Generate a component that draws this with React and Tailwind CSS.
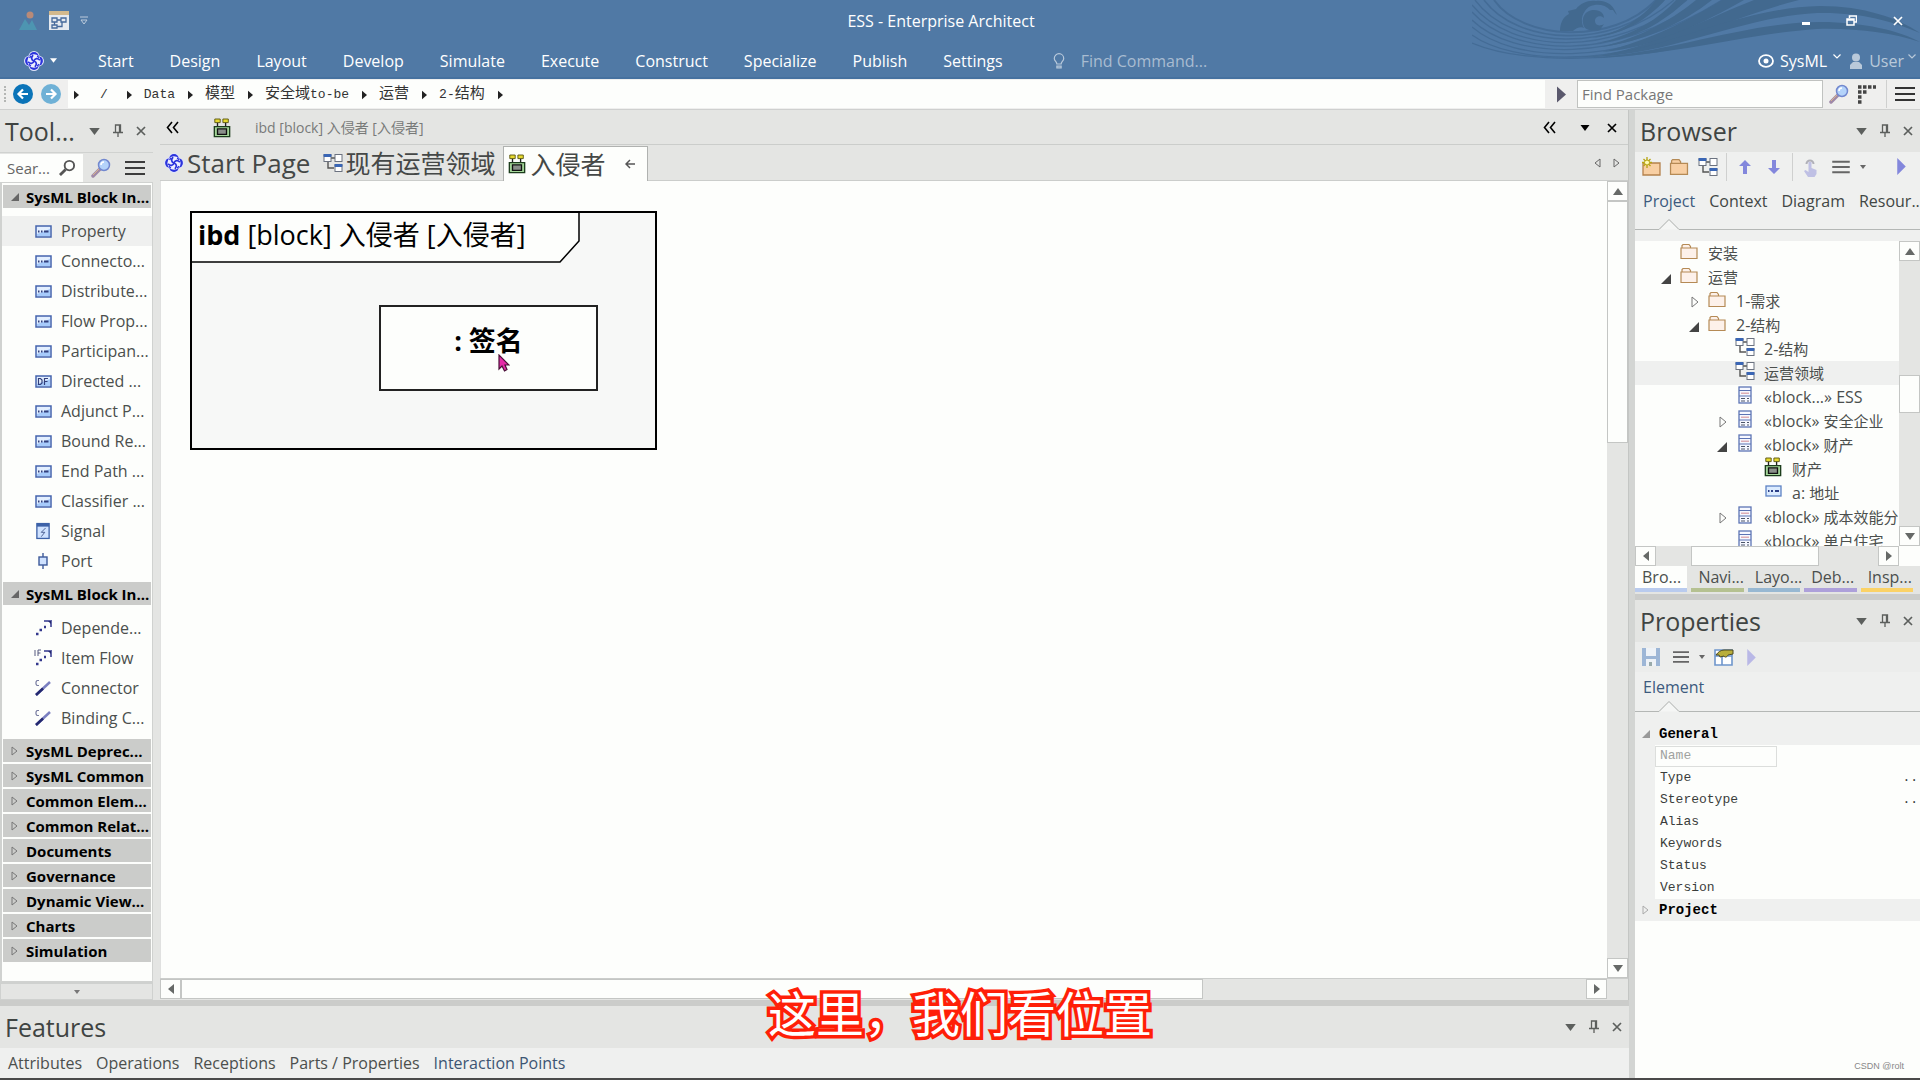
import React, { useState } from 'react'

const menus = ['Start', 'Design', 'Layout', 'Develop', 'Simulate', 'Execute', 'Construct', 'Specialize', 'Publish', 'Settings']

const crumbs = ['/', 'Data', '模型', '安全域to-be', '运营', '2-结构']

const toolItems = [
    { label: 'Property', icon: 'prop' },
    { label: 'Connecto...', icon: 'prop' },
    { label: 'Distribute...', icon: 'prop' },
    { label: 'Flow Prop...', icon: 'prop' },
    { label: 'Participan...', icon: 'prop' },
    { label: 'Directed ...', icon: 'df' },
    { label: 'Adjunct P...', icon: 'prop' },
    { label: 'Bound Re...', icon: 'prop' },
    { label: 'End Path ...', icon: 'prop' },
    { label: 'Classifier ...', icon: 'prop' },
    { label: 'Signal', icon: 'signal' },
    { label: 'Port', icon: 'port' },
]

const relationItems = [
    { label: 'Depende...', icon: 'dep' },
    { label: 'Item Flow', icon: 'flow' },
    { label: 'Connector', icon: 'conn' },
    { label: 'Binding C...', icon: 'conn' },
]

const closedGroups = ['SysML Deprec...', 'SysML Common', 'Common Elem...', 'Common Relat...', 'Documents', 'Governance', 'Dynamic View...', 'Charts', 'Simulation']

const treeRows = [
    { indent: 'pl-[22px]', icon: 'folder', text: '安装' },
    { indent: 'pl-[22px]', state: 'open', icon: 'folder', text: '运营' },
    { indent: 'pl-[50px]', state: 'closed', icon: 'folder', text: '1-需求' },
    { indent: 'pl-[50px]', state: 'open', icon: 'folder', text: '2-结构' },
    { indent: 'pl-[78px]', icon: 'diagram', text: '2-结构' },
    { indent: 'pl-[78px]', icon: 'diagram', text: '运营领域', selected: true },
    { indent: 'pl-[78px]', icon: 'block', text: '«block...» ESS' },
    { indent: 'pl-[78px]', state: 'closed', icon: 'block', text: '«block» 安全企业' },
    { indent: 'pl-[78px]', state: 'open', icon: 'block', text: '«block» 财产' },
    { indent: 'pl-[106px]', icon: 'ibd', text: '财产' },
    { indent: 'pl-[106px]', icon: 'part', text: 'a: 地址' },
    { indent: 'pl-[78px]', state: 'closed', icon: 'block', text: '«block» 成本效能分' },
    { indent: 'pl-[78px]', icon: 'block', text: '«block» 单户住宅' },
]

const dockTabs = [
    { label: 'Bro...', line: 'border-[#b9cbee]', active: true },
    { label: 'Navi...', line: 'border-[#b5c191]' },
    { label: 'Layo...', line: 'border-[#98b8d2]' },
    { label: 'Deb...', line: 'border-[#ada0da]' },
    { label: 'Insp...', line: 'border-[#fbd266]' },
]

const props = ['Type', 'Stereotype', 'Alias', 'Keywords', 'Status', 'Version']

// Chinese runs are set at 15px next to the larger or smaller latin text
function Mixed({ text }) {
    return text.split(/([\u4e00-\u9fff]+)/).map((part, i) => (
        i % 2 ? <span key={i} className="text-[15px]">{part}</span> : part
    ))
}

function Logo({ className }) {
    return (
        <svg viewBox="0 0 22 22" className={className}>
            <g fill="#dfe3fb">
                <circle cx="11" cy="6" r="6" />
                <circle cx="16" cy="11" r="6" />
                <circle cx="11" cy="16" r="6" />
                <circle cx="6" cy="11" r="6" />
            </g>
            <g fill="#2b33dc">
                <circle cx="11" cy="6.500" r="5.300" />
                <circle cx="15.500" cy="11" r="5.300" />
                <circle cx="11" cy="15.500" r="5.300" />
                <circle cx="6.500" cy="11" r="5.300" />
            </g>
            <circle cx="11" cy="11" r="7.300" fill="#eef0ff" />
            <g fill="none" stroke="#2b33dc" strokeWidth="1.900">
                <path d="M11 11C8 10 7.500 7 10 4.500M11 11C12 8 15 7.500 17.500 10M11 11C14 12 14.500 15 12 17.500M11 11C10 14 7 14.500 4.500 12" />
            </g>
            <path d="M6 7.500l2-2M14.500 5.500l2 2M16.500 14.500l-2 2M7.500 16.500l-2-2" stroke="#2b33dc" strokeWidth="1.500" />
        </svg>
    )
}

function Down({ className }) {
    return <svg viewBox="0 0 12 8" className={className}><path d="M0 0h12L6 8z" fill="currentColor" /></svg>
}

function Pin() {
    return (
        <svg viewBox="0 0 10 14" className="w-[10px] h-[14px]">
            <path d="M2.500 8V1h5v7M6.500 1v7M0 8.500h10M5 9v4" fill="none" stroke="currentColor" strokeWidth="1.300" />
        </svg>
    )
}

function Cross({ className }) {
    return (
        <svg viewBox="0 0 10 10" className={className}>
            <path d="M1 1l8 8M9 1l-8 8" fill="none" stroke="currentColor" strokeWidth="1.700" />
        </svg>
    )
}

function Burger({ className }) {
    return (
        <svg viewBox="0 0 20 16" className={className}>
            <path d="M0 2h20M0 8h20M0 14h20" stroke="currentColor" strokeWidth="2.200" />
        </svg>
    )
}

function Glass({ className }) {
    return (
        <svg viewBox="0 0 20 20" className={className}>
            <path d="M2 18l7-7" stroke="#a08aa8" strokeWidth="3.500" strokeLinecap="round" />
            <path d="M2 17l6-6" stroke="#d9b48d" strokeWidth="1" />
            <circle cx="13" cy="7" r="5.500" fill="#b4d3fa" stroke="#7288cf" strokeWidth="1.500" />
            <path d="M10 7a3 3 0 0 1 3-3" stroke="#fff" strokeWidth="1.500" fill="none" />
        </svg>
    )
}

function DiagramIcon({ className }) {
    return (
        <svg viewBox="0 0 20 20" className={className}>
            <path d="M8 5h4M5 8v7h6" fill="none" stroke="#555" strokeWidth="1.400" />
            <g fill="#fff" stroke="#6b7280">
                <rect x="1" y="1.500" width="7" height="7" />
                <rect x="12" y="1.500" width="7" height="7" />
                <rect x="12" y="11.500" width="7" height="7" />
            </g>
            <path d="M1 1.500h7v2H1zM12 11.500h7v2h-7z" fill="#3a66b5" stroke="#3a66b5" />
        </svg>
    )
}

function IbdIcon({ className }) {
    return (
        <svg viewBox="0 0 20 22" className={className}>
            <path d="M5 5v8M14 5v5" stroke="#222" strokeWidth="1.500" />
            <path d="M2 1h6v4H2zM11 1h6v4h-6z" fill="#e6d92e" stroke="#57530f" />
            <path d="M1.500 9.500h17v11h-17z" fill="#a6d89b" stroke="#1c3d1c" strokeWidth="1.500" />
            <path d="M5 12h10v6H5z" fill="#8a8f8a" stroke="#111" strokeWidth="1.500" />
        </svg>
    )
}

function FolderIcon({ className, fill }) {
    return (
        <svg viewBox="0 0 18 17" className={className}>
            <path d="M2 5V2.500L3 1.500h6l1.500 2V5M1 5h16v10.500H1z" fill={fill} stroke="#b58a55" strokeWidth="1.200" />
        </svg>
    )
}

function TreeIcon({ name }) {
    if (name === 'folder') return <FolderIcon className="w-[18px] h-[17px]" fill="#fdf1ea" />
    if (name === 'diagram') return <DiagramIcon className="w-5 h-5" />
    if (name === 'ibd') return <IbdIcon className="w-[18px] h-5" />
    if (name === 'part') {
        return (
            <svg viewBox="0 0 17 12" className="w-[17px] h-3">
                <rect x="1" y="1" width="15" height="10" fill="#dcecff" stroke="#5d82c4" strokeWidth="1.300" />
                <path d="M3 6h1.500M6 6h2M10 6h4" stroke="#2c3f86" strokeWidth="1.800" />
            </svg>
        )
    }
    return (
        <svg viewBox="0 0 14 18" className="w-[14px] h-[18px]">
            <rect x="1" y="1" width="12" height="16" fill="#f6f8ff" stroke="#5d74b4" strokeWidth="1.300" />
            <path d="M1 4.500h12M1 10h12" stroke="#5d74b4" strokeWidth="1.200" />
            <path d="M3 7.200h8" stroke="#d79aa2" strokeWidth="1.200" />
            <path d="M3 12.500h4M9 12.500h2M3 15h4M9 15h2" stroke="#4b5568" />
        </svg>
    )
}

function ToolIcon({ name }) {
    if (name === 'signal') {
        return (
            <svg viewBox="0 0 16 19" className="w-[14px] h-[18px]">
                <rect x="1" y="1" width="14" height="17" fill="#cfe2ff" stroke="#3d62a8" strokeWidth="1.500" />
                <path d="M1 3h14" stroke="#3d62a8" strokeWidth="3" />
                <path d="M11 6l-5 5h4l-4 5" fill="none" stroke="#3f5388" />
            </svg>
        )
    }
    if (name === 'port') {
        return (
            <svg viewBox="0 0 10 16" className="w-[10px] h-4">
                <path d="M5 0v16" stroke="#3d5a9a" strokeWidth="1.400" />
                <rect x="1" y="4" width="8" height="8" fill="#cfe2ff" stroke="#3d5a9a" strokeWidth="1.400" />
            </svg>
        )
    }
    if (name === 'dep' || name === 'flow') {
        return (
            <svg viewBox="0 0 18 18" className="w-[18px] h-[18px]">
                <path d="M10 2h7v6" fill="none" stroke="#6468a8" strokeWidth="2" />
                <path d="M14 2h3v3z" fill="#22266f" />
                <path d="M2 15h2.500M5.500 11h2.500M10 8h2" stroke="#33378c" strokeWidth="2.500" />
                {name === 'flow' && <path d="M1 1v6M4 7V1h3M4 4h2.500" fill="none" stroke="#55597f" />}
            </svg>
        )
    }
    if (name === 'conn') {
        return (
            <svg viewBox="0 0 18 18" className="w-[18px] h-[18px]">
                <path d="M2 16L16 3" stroke="#7a7fc0" strokeWidth="2.500" />
                <path d="M2 16l7-6.500" stroke="#23286f" strokeWidth="2.500" />
                <path d="M5 1.500H3L2 3v2l1 1.500h2" fill="none" stroke="#777ba0" strokeWidth="1.200" />
            </svg>
        )
    }
    return (
        <svg viewBox="0 0 17 13" className="w-[17px] h-[13px]">
            <rect x="1" y="1" width="15" height="11" fill="#e3efff" stroke="#4564ad" strokeWidth="1.500" />
            <path d="M2 9l13-5v7H2z" fill="#a7cbfb" />
            {name === 'df'
                ? <path d="M3.500 3.500v6h2L7 8V5L5.500 3.500zM9.500 10V3.500H13M9.500 6.500h3" fill="none" stroke="#33407c" strokeWidth="1.200" />
                : <path d="M3 6.500h1.500M6 6.500h1.500M9 6.500h4.500" stroke="#33407c" strokeWidth="1.800" />}
        </svg>
    )
}

function PanelTitle({ children }) {
    return (
        <div className="flex items-center h-[42px] shrink-0 bg-[#e4e5e3] pl-[5px] text-[#5c5f5d]">
            <h2 className="flex-1 text-[25px] leading-8 text-[#3f4442] whitespace-nowrap">{children}</h2>
            <button aria-label="Menu"><Down className="w-[11px] h-[7px]" /></button>
            <button aria-label="Pin" className="ml-[13px]"><Pin /></button>
            <button aria-label="Close" className="ml-[13px] mr-[7px]"><Cross className="w-[10px] h-[10px]" /></button>
        </div>
    )
}

function GroupHeader({ label, open }) {
    return (
        <button className="flex items-center w-full h-[23px] bg-[#cbccca] pl-2 text-[15px] leading-5 font-bold text-black whitespace-nowrap overflow-hidden">
            <svg viewBox="0 0 8 10" className="w-2 h-[10px] mr-[7px] shrink-0">
                {open ? <path d="M8 1v8H0z" fill="#666" /> : <path d="M1 1v8l5-4z" fill="none" stroke="#777" />}
            </svg>
            {label}
        </button>
    )
}

function ToolItem({ item, active, onClick }) {
    return (
        <button
            onClick={onClick}
            className={`flex items-center w-full h-[30px] pl-8 text-base leading-5 text-[#4b4f4d] whitespace-nowrap ${active ? 'bg-[#eff0ef]' : ''}`}
        >
            <span className="flex justify-center w-[18px] mr-[9px] shrink-0"><ToolIcon name={item.icon} /></span>
            {item.label}
        </button>
    )
}

function ScrollButton({ dir }) {
    const paths = { up: 'M0 9l5-7 5 7z', down: 'M0 2h10L5 9z', left: 'M8 0v10L2 5z', right: 'M2 0v10l6-5z' }
    return (
        <button aria-label={dir} className="flex items-center justify-center w-[21px] h-5 shrink-0 bg-[#fdfefc] border border-[#c4c6c4]">
            <svg viewBox="0 0 10 10" className="w-[10px] h-[10px]"><path d={paths[dir]} fill="#666967" /></svg>
        </button>
    )
}

function NotchLine() {
    return (
        <div className="flex h-[11px] shrink-0">
            <div className="w-6 border-b border-[#b4b7b5]"></div>
            <svg viewBox="0 0 20 11" className="w-5 h-[11px]"><path d="M0 10.500L10 0.500L20 10.500" fill="#f5f6f5" stroke="#a9acaa" /></svg>
            <div className="flex-1 border-b border-[#b4b7b5]"></div>
        </div>
    )
}

function Swirl() {
    return (
        <svg viewBox="0 0 448 79" className="absolute right-0 top-0 w-[448px] h-[79px]">
            <g fill="none" stroke="#446c96" strokeWidth="1.300">
                <path d="M22 0C50 40 140 46 184 0" strokeWidth="2" />
                <path d="M12 0C45 45 140 50 192 0" strokeWidth="1.600" />
                <path d="M3 0C40 50 140 54 202 0" />
                <path d="M0 5C40 54 140 58 215 0" />
                <path d="M0 12C40 57 145 62 230 0" />
                <path d="M0 20C40 59 145 66 250 0" />
                <path d="M0 27C40 62 145 68 240 12" />
                <path d="M0 35C40 64 145 68 230 25" />
                <path d="M0 43C50 64 140 62 220 45" />
            </g>
            <g fill="#42698f">
                <path d="M120 38C150 32 170 18 184 0h9C175 20 152 34 120 38z" />
                <path d="M125 43C160 36 188 18 204 0h11C192 22 162 40 125 43z" />
                <path d="M128 47C170 38 205 16 224 0h16C212 22 172 42 128 47z" />
                <path d="M130 52C180 40 220 18 250 0h22C232 22 185 48 130 52z" />
                <path d="M130 55C190 44 240 16 282 0h45C262 16 195 52 130 55z" />
                <path d="M110 57C190 54 260 8 348 6c44 0 78 12 100 27C420 21 388 12 345 13C265 17 195 58 110 57z" />
                <path d="M120 58C200 52 275 22 348 22c44 0 80 9 100 20C420 33 385 28 345 29C280 33 200 56 120 58z" />
            </g>
            <path
                d="M88 31c0-8 3-14 9-17l-1-3 8-2c5-6 12-9 20-8 9-1 15 3 18 8l2 4 1 2-2-2-2-3-3 0c-6-7-20-7-25 1-5 7-3 13-1 17-3-2-8 0-11 3zM113 28c-5-8-1-18 9-18 7 0 10 4 10 8-3-3-9-2-9 3 0 4 4 6 9 3l-4 6c-5 1-11 1-15-2z"
                fill="#42698f"
            />
        </svg>
    )
}

function Header() {
    return (
        <header className="relative h-[79px] shrink-0 bg-[#5079a5] border-b-2 border-[#46719f] text-white overflow-hidden">
            <Swirl />
            <div className="relative flex items-center h-[41px]">
                <div className="flex items-center flex-1 pl-[19px]">
                    <svg viewBox="0 0 18 20" className="w-[18px] h-5">
                        <circle cx="11" cy="4" r="3.500" fill="#b98a78" />
                        <path d="M0 19L6 8l4 6 3-5 5 10z" fill="#4d95b1" />
                    </svg>
                    <svg viewBox="0 0 20 19" className="w-5 h-[19px] ml-3">
                        <rect x="0" y="0" width="20" height="19" fill="#e6eaf0" />
                        <rect x="0" y="0" width="20" height="4" fill="#d3b98d" />
                        <path d="M3 7h5v4H3zM12 7h5v4h-5zM3 14h5v3H3zM8 9h4M5.500 11v3M8 15.500h5V11" fill="none" stroke="#46699b" strokeWidth="1.300" />
                    </svg>
                    <svg viewBox="0 0 8 9" className="w-2 h-[9px] ml-[11px] text-[#bccbdc]">
                        <path d="M0 1h8M1 4h6L4 8z" fill="none" stroke="currentColor" />
                    </svg>
                </div>
                <h1 className="mr-10 text-base leading-5">ESS - Enterprise Architect</h1>
                <div className="flex items-center justify-end flex-1 gap-9 pr-[17px]">
                    <button aria-label="Minimize" className="w-2 h-[3px] mt-[6px] bg-white"></button>
                    <button aria-label="Restore">
                        <svg viewBox="0 0 11 11" className="w-[11px] h-[11px]"><path d="M3.500 3V1h7v6H8M1 4h7v6H1zM1 5h7" fill="none" stroke="#fff" strokeWidth="1.500" /></svg>
                    </button>
                    <button aria-label="Close"><Cross className="w-[10px] h-[10px]" /></button>
                </div>
            </div>
            <div className="relative flex items-center h-[38px] pt-px text-base leading-5">
                <button aria-label="Application menu" className="flex items-center w-[98px] pl-6 shrink-0">
                    <Logo className="w-5 h-5" />
                    <Down className="w-[7px] h-[5px] ml-[6px]" />
                </button>
                <nav className="flex gap-9">
                    {menus.map(m => <button key={m}>{m}</button>)}
                </nav>
                <label className="flex items-center flex-1 ml-[50px] text-[#b8c9db]">
                    <svg viewBox="0 0 14 18" className="w-3 h-4 mr-4">
                        <path d="M4.500 12.500C4.500 10 1.500 9 1.500 6a5.500 5.500 0 0 1 11 0c0 3-3 4-3 6.500zM4.500 15h5v2h-5z" fill="none" stroke="currentColor" strokeWidth="1.400" />
                    </svg>
                    <input aria-label="Find Command" placeholder="Find Command..." className="w-40 bg-transparent outline-none placeholder:text-[#a9bcd1]" />
                </label>
                <button className="flex items-center mr-2">
                    <svg viewBox="0 0 16 14" className="w-4 h-[14px] mr-[6px]">
                        <ellipse cx="8" cy="7" rx="7" ry="5.800" fill="none" stroke="#fff" strokeWidth="1.800" />
                        <circle cx="8" cy="7" r="2.500" fill="#fff" />
                    </svg>
                    SysML
                    <svg viewBox="0 0 8 5" className="w-2 h-[5px] ml-[6px] mb-2"><path d="M0.500 0.500L4 4l3.500-3.500" fill="none" stroke="#fff" strokeWidth="1.200" /></svg>
                </button>
                <button className="flex items-center mr-1 text-[#b9c9da]">
                    <svg viewBox="0 0 14 16" className="w-[14px] h-4 mr-[6px]">
                        <circle cx="7" cy="4.500" r="4" fill="currentColor" />
                        <path d="M1 16v-4l3-3h6l3 3v4z" fill="currentColor" />
                    </svg>
                    User
                    <svg viewBox="0 0 8 5" className="w-2 h-[5px] ml-1 mb-2"><path d="M0.500 0.500L4 4l3.500-3.500" fill="none" stroke="currentColor" strokeWidth="1.200" /></svg>
                </button>
            </div>
        </header>
    )
}

function NavBar() {
    return (
        <div className="flex items-center h-[31px] shrink-0 bg-[#efefee] border-b border-[#cfd0cf] text-[#333]">
            <div className="w-[13px] h-4 pl-1"><div className="h-full border-l-2 border-dotted border-[#b4b6b4]"></div></div>
            <button aria-label="Back">
                <svg viewBox="0 0 20 20" className="w-5 h-5"><circle cx="10" cy="10" r="10" fill="#0b74b8" /><path d="M15 10H6M10 5.500L5.500 10l4.500 4.500" fill="none" stroke="#fff" strokeWidth="2.200" /></svg>
            </button>
            <button aria-label="Forward" className="ml-2 mr-[7px]">
                <svg viewBox="0 0 20 20" className="w-5 h-5"><circle cx="10" cy="10" r="10" fill="#6fb1d6" /><path d="M5 10h9M10 5.500l4.500 4.500-4.500 4.500" fill="none" stroke="#fff" strokeWidth="2.200" /></svg>
            </button>
            <nav className="flex items-center flex-1 h-7 pl-[6px] pt-[2px] bg-[#fdfefc] font-['Liberation_Mono','Noto_Sans_CJK_SC',monospace] text-[13px] leading-5">
                <svg viewBox="0 0 6 10" className="w-[5px] h-[10px] mr-[11px]"><path d="M0 0l6 5-6 5z" fill="#222" /></svg>
                {crumbs.map(c => (
                    <React.Fragment key={c}>
                        <a href="#" className={c === '/' ? 'pl-[10px] pr-[6px]' : ''}><Mixed text={c} /></a>
                        <svg viewBox="0 0 6 10" className="w-[5px] h-[10px] ml-[13px] mr-3"><path d="M0 0l6 5-6 5z" fill="#222" /></svg>
                    </React.Fragment>
                ))}
            </nav>
            <button aria-label="Go" className="w-8 pl-3"><svg viewBox="0 0 10 18" className="w-[9px] h-[17px]"><path d="M0 0l10 9-10 9z" fill="#5a586c" /></svg></button>
            <input aria-label="Find Package" placeholder="Find Package" className="w-[246px] h-7 px-1 bg-[#fdfefc] border border-[#c0c2c0] text-[15px] leading-5 placeholder:text-[#777] outline-none" />
            <button aria-label="Search" className="ml-[6px]"><Glass className="w-5 h-5" /></button>
            <svg viewBox="0 0 20 20" className="w-5 h-5 ml-2">
                <path d="M1 3h18M1 8h10M1 13h4M1 18h4" stroke="#444" strokeWidth="3.500" strokeDasharray="3.500 1.500" fill="none" />
            </svg>
            <div className="w-px h-7 ml-[9px] mr-2 bg-[#cfd0cf]"></div>
            <button aria-label="Options" className="mr-[5px]"><Burger className="w-5 h-4" /></button>
        </div>
    )
}

function Toolbox() {
    const [selected, setSelected] = useState('Property')
    return (
        <aside className="flex flex-col w-[153px] shrink-0 bg-[#e4e5e3]">
            <PanelTitle>Tool...</PanelTitle>
            <div className="flex items-center h-[30px] shrink-0 border-t border-[#d0d2d0]">
                <label className="flex items-center w-[83px] h-7 pl-[7px] bg-[#fdfefc]">
                    <input aria-label="Search" placeholder="Sear..." className="w-[52px] text-[15px] leading-5 placeholder:text-[#666] outline-none bg-transparent" />
                    <svg viewBox="0 0 18 18" className="w-[17px] h-[17px]"><circle cx="11" cy="7" r="5" fill="none" stroke="#555" strokeWidth="2" /><path d="M7 11l-6 6" stroke="#555" strokeWidth="3" /></svg>
                </label>
                <button aria-label="Find" className="ml-2"><Glass className="w-5 h-5" /></button>
                <button aria-label="Options" className="ml-[14px] text-[#3c3c3c]"><Burger className="w-5 h-4" /></button>
            </div>
            <div className="flex-1 min-h-0 overflow-hidden bg-[#fdfefc] border border-[#d0d2d0] border-l-2 pt-[2px]">
                <div className="px-px"><GroupHeader label="SysML Block In..." open /></div>
                <div className="pt-2 pb-[6px]">
                    {toolItems.map(i => <ToolItem key={i.label} item={i} active={selected === i.label} onClick={() => setSelected(i.label)} />)}
                </div>
                <div className="px-px"><GroupHeader label="SysML Block In..." open /></div>
                <div className="pt-2 pb-[6px]">
                    {relationItems.map(i => <ToolItem key={i.label} item={i} active={selected === i.label} onClick={() => setSelected(i.label)} />)}
                </div>
                <div className="flex flex-col gap-[2px] px-px">
                    {closedGroups.map(g => <GroupHeader key={g} label={g} />)}
                </div>
            </div>
            <button aria-label="Scroll down" className="flex items-center justify-center h-[18px] shrink-0 border border-t-2 border-[#cfd1cf] text-[#777]">
                <Down className="w-[6px] h-1" />
            </button>
        </aside>
    )
}

function Diagram() {
    return (
        <div className="relative flex-1 min-w-0 bg-[#fdfefc] border-l border-[#e0e1e0] text-black">
            <div className="absolute left-[29px] top-[30px] w-[467px] h-[239px] bg-[#f7f8f7] border-2 border-black">
                <svg viewBox="0 0 390 51" className="absolute left-0 top-0 w-[390px] h-[51px]">
                    <path d="M0 0H387V28L368 49H0z" fill="#fdfefc" />
                    <path d="M387 0V28L368 49H0" fill="none" stroke="#000" strokeWidth="1.500" />
                </svg>
                <div className="absolute left-[6px] top-1 text-[27px] leading-9 whitespace-nowrap"><b>ibd</b> [block] 入侵者 [入侵者]</div>
                <div className="absolute left-[187px] top-[92px] flex justify-center w-[219px] h-[86px] pt-4 bg-[#fdfefc] border-2 border-[#222] text-[27px] leading-9 font-bold whitespace-nowrap">: 签名</div>
                <svg viewBox="0 0 12 18" className="absolute left-[306px] top-[141px] w-3 h-[18px]">
                    <path d="M1 1v14l3-3 2.500 5 2.500-1.500L7 11h4z" fill="#e62aa8" stroke="#4a1038" strokeWidth="1.200" />
                </svg>
            </div>
        </div>
    )
}

function Workspace() {
    return (
        <main className="flex flex-col flex-1 min-w-0 ml-[7px] pt-px border-r border-[#c4c6c4]">
            <div className="flex items-center h-[34px] shrink-0 pl-[6px] border-b border-[#cbcdcb] text-black">
                <button aria-label="Collapse"><svg viewBox="0 0 13 13" className="w-[13px] h-[13px]"><path d="M6 1L1.500 6.500 6 12M12 1L7.500 6.500 12 12" fill="none" stroke="#000" strokeWidth="1.600" /></svg></button>
                <IbdIcon className="w-[18px] h-5 ml-[34px]" />
                <div className="flex-1 ml-[24px] text-[14px] leading-5 text-[#787a79]">ibd [block] 入侵者 [入侵者]</div>
                <button aria-label="Expand"><svg viewBox="0 0 13 13" className="w-[13px] h-[13px]"><path d="M6 1L1.500 6.500 6 12M12 1L7.500 6.500 12 12" fill="none" stroke="#000" strokeWidth="1.600" /></svg></button>
                <button aria-label="Windows" className="ml-6"><Down className="w-[10px] h-[6px]" /></button>
                <button aria-label="Close diagram" className="ml-[17px] mr-[11px]"><Cross className="w-[10px] h-[10px]" /></button>
            </div>
            <div className="flex h-9 shrink-0 text-[25px] leading-8 text-[#454847] whitespace-nowrap">
                <button className="flex items-center pl-1 pr-[13px] border-b border-[#cbcdcb] text-[26px]"><Logo className="w-5 h-5 mr-[3px]" />Start Page</button>
                <button className="flex items-center pr-2 border-b border-[#cbcdcb]"><DiagramIcon className="w-5 h-5 mr-[2px]" />现有运营领域</button>
                <button className="flex items-center w-[145px] pl-1 mt-px bg-[#fdfefc] border border-b-0 border-[#b0b2b0]">
                    <IbdIcon className="w-[18px] h-5 mr-[4px]" />入侵者
                    <svg viewBox="0 0 10 10" className="w-[10px] h-[10px] ml-[20px]"><path d="M10 5H1M5 1L1 5l4 4" fill="none" stroke="#555" strokeWidth="1.500" /></svg>
                </button>
                <div className="flex items-center justify-end flex-1 gap-3 pr-2 border-b border-[#cbcdcb]">
                    <button aria-label="Previous tab"><svg viewBox="0 0 7 10" className="w-[7px] h-[10px]"><path d="M6 1v8L1 5z" fill="none" stroke="#666" /></svg></button>
                    <button aria-label="Next tab"><svg viewBox="0 0 7 10" className="w-[7px] h-[10px]"><path d="M1 1v8l5-4z" fill="none" stroke="#666" /></svg></button>
                </div>
            </div>
            <div className="flex flex-1 min-h-0">
                <Diagram />
                <div className="flex flex-col w-[21px] shrink-0">
                    <ScrollButton dir="up" />
                    <div className="flex flex-col flex-1">
                        <div className="h-[32%] bg-[#fdfefc] border border-[#c4c6c4]"></div>
                    </div>
                    <ScrollButton dir="down" />
                </div>
            </div>
            <div className="flex h-[22px] shrink-0 pr-[21px] pb-px border-t border-[#cbcdcb]">
                <ScrollButton dir="left" />
                <div className="flex-1"><div className="w-8/11 h-5 bg-[#fdfefc] border border-[#c4c6c4]"></div></div>
                <ScrollButton dir="right" />
            </div>
        </main>
    )
}

function Features() {
    const tabs = ['Attributes', 'Operations', 'Receptions', 'Parts / Properties']
    return (
        <section className="shrink-0 border-t-[6px] border-[#cbccca]">
            <PanelTitle>Features</PanelTitle>
            <nav className="flex items-center gap-[14px] h-[30px] pl-2 bg-[#eff0ef] text-base leading-5 text-[#4b4f4d]">
                {tabs.map(t => <button key={t}>{t}</button>)}
                <button className="text-[#3d5573]">Interaction Points</button>
            </nav>
        </section>
    )
}

function Browser() {
    return (
        <section className="flex flex-col shrink-0 bg-[#eff0ef]">
            <PanelTitle>Browser</PanelTitle>
            <div className="flex items-center h-[29px] pl-[6px]">
                <button aria-label="New package">
                    <svg viewBox="0 0 20 20" className="w-5 h-5">
                        <path d="M2 6h17v12H2z" fill="#f8cfa3" stroke="#b4814c" strokeWidth="1.300" />
                        <path d="M6 0v11M1 5.500h10M2.500 2l7 7M9.500 2l-7 7" stroke="#b6a411" strokeWidth="1.300" />
                        <circle cx="6" cy="5.500" r="2.500" fill="#fffbb5" stroke="#b6a411" />
                    </svg>
                </button>
                <button aria-label="Open package" className="ml-2"><FolderIcon className="w-5 h-[18px]" fill="#f8cfa3" /></button>
                <button aria-label="New diagram" className="ml-[9px]"><DiagramIcon className="w-5 h-5" /></button>
                <div className="w-px h-7 ml-2 bg-[#cfd0cf]"></div>
                <button aria-label="Move up" className="ml-3"><svg viewBox="0 0 12 14" className="w-3 h-[14px]"><path d="M6 0l6 6H8v8H4V6H0z" fill="#8387dc" /></svg></button>
                <button aria-label="Move down" className="ml-[17px]"><svg viewBox="0 0 12 14" className="w-3 h-[14px]"><path d="M6 14l6-6H8V0H4v8H0z" fill="#8387dc" /></svg></button>
                <div className="w-px h-7 ml-3 bg-[#cfd0cf]"></div>
                <button aria-label="Select" className="ml-[10px]">
                    <svg viewBox="0 0 14 20" className="w-[14px] h-5">
                        <path d="M3.500 7a3.500 3.500 0 1 1 7 0" fill="none" stroke="#b0b0b8" strokeWidth="2" />
                        <path d="M5.500 5h3v6l5 2v4l-2 3H5l-4-6 1.500-1 3 2z" fill="#bfc0e4" />
                    </svg>
                </button>
                <button aria-label="Options" className="flex items-center ml-[14px] text-[#666]"><Burger className="w-5 h-[14px]" /><Down className="w-[6px] h-1 ml-[9px]" /></button>
                <button aria-label="More" className="ml-auto mr-[14px]"><svg viewBox="0 0 9 18" className="w-[9px] h-[17px]"><path d="M0 0l9 9-9 9z" fill="#8387dc" /></svg></button>
            </div>
            <nav className="flex items-start gap-[14px] h-[38px] pt-[10px] pl-2 text-base leading-5 text-[#414644] whitespace-nowrap">
                <button className="text-[#3d5a7e]">Project</button>
                <button>Context</button>
                <button>Diagram</button>
                <button>Resour...</button>
            </nav>
            <NotchLine />
            <div className="flex h-[305px] mt-[11px] bg-[#e4e5e3]">
                <ul className="flex-1 min-w-0 overflow-hidden bg-[#fdfefc] text-base leading-6 text-[#4b4f4d]">
                    {treeRows.map((r, i) => (
                        <li key={i} className={`flex h-6 whitespace-nowrap ${r.indent} ${r.selected ? 'bg-[#eff0ef]' : ''}`}>
                            <span className="flex items-end w-[22px] pb-[5px] pl-1 shrink-0">
                                {r.state === 'open' && <svg viewBox="0 0 10 10" className="w-[10px] h-[10px]"><path d="M10 0v10H0z" fill="#444" /></svg>}
                                {r.state === 'closed' && <svg viewBox="0 0 8 12" className="w-2 h-3 ml-[2px]"><path d="M1 1v10l6-5z" fill="none" stroke="#777" /></svg>}
                            </span>
                            <span className="flex justify-center items-center w-5 h-5 mr-[9px] shrink-0"><TreeIcon name={r.icon} /></span>
                            <span><Mixed text={r.text} /></span>
                        </li>
                    ))}
                </ul>
                <div className="flex flex-col w-[21px] shrink-0">
                    <ScrollButton dir="up" />
                    <div className="flex-1 pt-[114px]"><div className="h-[38px] bg-[#fdfefc] border border-[#c4c6c4]"></div></div>
                    <ScrollButton dir="down" />
                </div>
            </div>
            <div className="flex bg-[#e4e5e3]">
                <ScrollButton dir="left" />
                <div className="flex-1 pl-[35px]"><div className="w-32 h-5 bg-[#fdfefc] border border-[#c4c6c4]"></div></div>
                <ScrollButton dir="right" />
                <div className="w-[21px] bg-[#fdfefc]"></div>
            </div>
            <nav className="flex gap-1 h-[28px] pb-[2px] pr-[7px] bg-[#e4e5e3] text-base leading-5 text-[#4b4f4d]">
                {dockTabs.map(t => (
                    <button key={t.label} className={`flex-1 min-w-0 pl-[7px] text-left border-b-4 whitespace-nowrap ${t.line} ${t.active ? 'bg-[#fdfefc]' : ''}`}>{t.label}</button>
                ))}
            </nav>
        </section>
    )
}

function Properties() {
    return (
        <section className="flex flex-col flex-1 min-h-0 border-t-[6px] border-[#cbccca] bg-[#eff0ef]">
            <PanelTitle>Properties</PanelTitle>
            <div className="flex items-center h-[30px] pl-[7px] bg-[#ecedec] shrink-0">
                <button aria-label="Save">
                    <svg viewBox="0 0 18 18" className="w-[18px] h-[18px]"><path d="M0 0h18v18H0z" fill="#9db6d6" /><path d="M4 0h10v8H4zM4 11h10v7H4z" fill="#eef2f7" /><path d="M7 14h3v4H7z" fill="#9aa" /></svg>
                </button>
                <button aria-label="View" className="flex items-center ml-[13px] text-[#666]"><Burger className="w-4 h-[14px]" /><Down className="w-[6px] h-1 ml-[10px]" /></button>
                <button aria-label="Edit" className="ml-[9px]">
                    <svg viewBox="0 0 20 18" className="w-5 h-[18px]">
                        <path d="M1 2h17v15H1zM1 8h17M8 8v9" fill="#fff" stroke="#6f96cc" strokeWidth="1.600" />
                        <path d="M2 7c2-3 5-5 8-5h9v4l-5 1c-1 2-3 3-4 1L6 9 5 7z" fill="#b9ae3a" stroke="#4d4a22" />
                    </svg>
                </button>
                <button aria-label="Run" className="ml-[13px]"><svg viewBox="0 0 9 18" className="w-[9px] h-[17px]"><path d="M0 0l9 9-9 9z" fill="#b9b8e6" /></svg></button>
            </div>
            <nav className="h-[29px] pt-[3px] pl-2 text-base leading-6 shrink-0"><button className="text-[#3d5a7e]">Element</button></nav>
            <NotchLine />
            <div className="flex-1 min-h-0 mt-[11px] bg-[#fdfefc] font-['Liberation_Mono',monospace] text-[13px] leading-[22px] text-[#3a3d3b]">
                <button className="flex items-center w-full h-[22px] pl-[7px] bg-[#eff0ef] font-bold text-[14px] text-black">
                    <svg viewBox="0 0 8 8" className="w-2 h-2 mr-[9px]"><path d="M8 0v8H0z" fill="#999" /></svg>General
                </button>
                <div className="pl-5 bg-[#eff0ef]">
                    <table className="w-full bg-[#fdfefc]">
                        <tbody>
                            <tr className="h-[22px]">
                                <td colSpan="2" className="p-0">
                                    <input aria-label="Name" placeholder="Name" className="block w-[122px] h-[21px] pl-1 border border-[#dcdedc] placeholder:text-[#a0a2a0] outline-none" />
                                </td>
                            </tr>
                            {props.map(p => (
                                <tr key={p} className="h-[22px]">
                                    <td className="p-0 pl-[5px]">{p}</td>
                                    <td className="p-0 pr-[2px] text-right">{p === 'Type' || p === 'Stereotype' ? '..' : ''}</td>
                                </tr>
                            ))}
                        </tbody>
                    </table>
                </div>
                <button className="flex items-center w-full h-[22px] pl-[7px] bg-[#eff0ef] font-bold text-[14px] text-black">
                    <svg viewBox="0 0 8 10" className="w-2 h-[10px] mr-[9px]"><path d="M1 1v8l5-4z" fill="none" stroke="#aaa" /></svg>Project
                </button>
            </div>
            <div className="shrink-0 h-5 pr-4 bg-[#fdfefc] text-right font-['Liberation_Sans',sans-serif] text-[9px] leading-4 text-[#888]">CSDN @rolt</div>
        </section>
    )
}

export default function App() {
    return (
        <div className="relative flex flex-col h-screen overflow-hidden bg-[#e4e5e3] border-b-2 border-[#4a4a4a] font-['Open_Sans','Noto_Sans_CJK_SC',sans-serif]">
            <Header />
            <NavBar />
            <div className="flex flex-1 min-h-0">
                <div className="flex flex-col flex-1 min-w-0">
                    <div className="flex flex-1 min-h-0">
                        <Toolbox />
                        <Workspace />
                    </div>
                    <Features />
                </div>
                <div className="flex flex-col w-[291px] shrink-0 border-l-[6px] border-[#d3d5d3]">
                    <Browser />
                    <Properties />
                </div>
            </div>
            <p className="absolute bottom-[35px] left-0 w-full text-center text-[48px] leading-[64px] text-white font-['Noto_Sans_CJK_SC',sans-serif] [-webkit-text-stroke:7px_#ff1f08] [paint-order:stroke_fill] pointer-events-none">这里，我们看位置</p>
        </div>
    )
}
